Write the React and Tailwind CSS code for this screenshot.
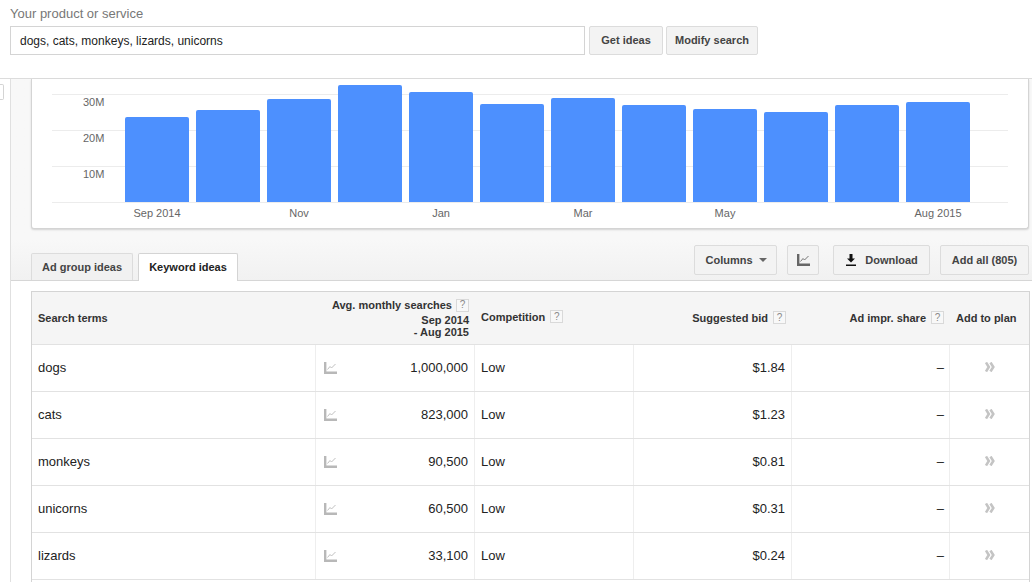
import React from 'react';

const bars = [
  { top: 117, label: 'Sep 2014' },
  { top: 110 },
  { top: 99, label: 'Nov' },
  { top: 85 },
  { top: 92, label: 'Jan' },
  { top: 104 },
  { top: 98, label: 'Mar' },
  { top: 105 },
  { top: 109, label: 'May' },
  { top: 112 },
  { top: 105 },
  { top: 102, label: 'Aug 2015' }
];

const rows = [
  { term: 'dogs', searches: '1,000,000', bid: '$1.84' },
  { term: 'cats', searches: '823,000', bid: '$1.23' },
  { term: 'monkeys', searches: '90,500', bid: '$0.81' },
  { term: 'unicorns', searches: '60,500', bid: '$0.31' },
  { term: 'lizards', searches: '33,100', bid: '$0.24' }
];

const cols = 'grid grid-cols-[283px_159px_159px_158px_158px_80px]';

function Help() {
  return (
    <span className="inline-flex w-[13px] h-[13px] items-center justify-center border border-[#d9d9d9] bg-[#f8f8f8] text-[10px] font-normal text-[#8a8a8a] leading-none align-middle">
      ?
    </span>
  );
}

function TrendIcon({ className }) {
  return (
    <svg viewBox="0 0 13 12" className={className} fill="none" stroke="currentColor">
      <path d="M1.200 0v10.800H13" strokeWidth="2.400" />
      <path d="M3.500 7.500 6 4.500l1.500 1.500L11.500 2" strokeWidth="0.9" />
    </svg>
  );
}

function GrayButton({ className = '', children }) {
  return (
    <button className={`flex items-center justify-center rounded-[2px] border border-[#dcdcdc] bg-[#f3f3f3] text-[11px] font-bold text-[#444] ${className}`}>
      {children}
    </button>
  );
}

export default function App() {
  return (
    <div className="w-[1032px] h-[582px] overflow-hidden bg-white font-['Liberation_Sans',Arial,sans-serif] text-[13px] text-[#222]">
      {/* Search bar */}
      <div className="h-[79px] border-b border-[#dcdcdc] pl-[10px] pt-[6px]">
        <div className="text-[13px] leading-[15px] text-[#777]">Your product or service</div>
        <div className="flex mt-[5px] h-[29px]">
          <div className="w-[575px] border border-[#d4d4d4] flex items-center pl-[9px] text-[12px]">
            dogs, cats, monkeys, lizards, unicorns
          </div>
          <GrayButton className="ml-[4px] w-[74px]">Get ideas</GrayButton>
          <GrayButton className="ml-[3px] w-[92px]">Modify search</GrayButton>
        </div>
      </div>

      <div className="flex">
        {/* Left rail */}
        <div className="w-[10px] shrink-0 pt-[5px]">
          <div className="w-[4px] h-[16px] border border-l-0 border-[#d4d4d4] rounded-r-[2px]"></div>
        </div>

        <div className="flex-1 min-w-0 border-l border-[#e0e0e0]">
          <div className="h-[202px] bg-gradient-to-b from-[#f8f8f8] from-80% to-[#f1f1f1] border-b border-[#d6d6d6] pl-[20px] pr-[3px] flex flex-col">
            {/* Chart panel */}
            <div className="h-[150px] bg-white border border-t-0 border-[#d4d4d4] rounded-b-[3px] shadow-[0_1px_2px_rgba(0,0,0,0.15)] shrink-0">
              <div className="relative h-[124px] ml-[20px] w-[956px] border-b border-[#ececec]">
                <div className="absolute left-0 right-0 top-[15px] border-t border-[#ececec]"></div>
                <div className="absolute left-0 right-0 top-[51px] border-t border-[#ececec]"></div>
                <div className="absolute left-0 right-0 top-[87px] border-t border-[#ececec]"></div>
                <div className="absolute left-[31px] top-[16px] text-[11px] leading-[14px] text-[#666]">30M</div>
                <div className="absolute left-[31px] top-[52px] text-[11px] leading-[14px] text-[#666]">20M</div>
                <div className="absolute left-[31px] top-[88px] text-[11px] leading-[14px] text-[#666]">10M</div>
                <div className="absolute left-[73px] top-0 bottom-0 flex items-end gap-[7px]">
                  {bars.map((b, i) => (
                    <div key={i} className="w-[64px] bg-[#4d90fe] rounded-t-[2px]" style={{ height: 202 - b.top }}></div>
                  ))}
                </div>
              </div>
              <div className="ml-[93px] flex gap-[7px] mt-[3px]">
                {bars.map((b, i) => (
                  <div key={i} className="w-[64px] text-center text-[11px] leading-[14px] text-[#666] whitespace-nowrap">
                    {b.label}
                  </div>
                ))}
              </div>
            </div>

            {/* Tabs and toolbar */}
            <div className="flex-1 flex items-end justify-between">
              <div className="flex items-end gap-[5px] -mb-px">
                <div className="w-[102px] h-[27px] mb-px flex items-center justify-center border border-b-0 border-[#dcdcdc] rounded-t-[2px] bg-[#f1f1f1] text-[11px] font-bold text-[#444]">
                  Ad group ideas
                </div>
                <div className="w-[100px] h-[28px] flex items-center justify-center border border-b-0 border-[#d4d4d4] rounded-t-[2px] bg-white text-[11px] font-bold text-[#222]">
                  Keyword ideas
                </div>
              </div>
              <div className="flex mb-[5px]">
                <GrayButton className="w-[83px] h-[30px] gap-[6px] pl-[1px]">
                  Columns
                  <span className="w-0 h-0 border-x-[4px] border-x-transparent border-t-[4px] border-t-[#666]"></span>
                </GrayButton>
                <GrayButton className="w-[32px] h-[30px] ml-[10px]">
                  <TrendIcon className="w-[13px] h-[12px] text-[#666]" />
                </GrayButton>
                <GrayButton className="w-[97px] h-[30px] ml-[14px] gap-[8px]">
                  <svg viewBox="0 0 12 12" className="w-[12px] h-[12px] text-[#111]" fill="currentColor">
                    <path d="M4.500 0h3v4.500H10L6 8.500 2 4.500h2.500zM1 10.500h10V12H1z" />
                  </svg>
                  Download
                </GrayButton>
                <GrayButton className="w-[89px] h-[30px] ml-[10px]">Add all (805)</GrayButton>
              </div>
            </div>
          </div>

          {/* Keyword table */}
          <div className="ml-[20px] mt-[10px] w-[999px] border-l border-t border-r border-[#d4d4d4]">
            <div className={`${cols} h-[52px] bg-[#f5f5f5] text-[11px] font-bold leading-[12px] text-[#333]`}>
              <div className="flex items-center pl-[6px]">Search terms</div>
              <div className="flex flex-col items-end justify-center pr-[5px] -ml-[60px]">
                <div className="flex items-center gap-[4px] mb-[2px] whitespace-nowrap">Avg. monthly searches <Help /></div>
                <div>Sep 2014</div>
                <div>- Aug 2015</div>
              </div>
              <div className="flex items-center gap-[5px] pl-[7px] pb-[3px]">Competition <Help /></div>
              <div className="flex items-center justify-end gap-[5px] pr-[5px] pb-[1px]">Suggested bid <Help /></div>
              <div className="flex items-center justify-end gap-[5px] pr-[5px] pb-[1px]">Ad impr. share <Help /></div>
              <div className="flex items-center pl-[7px]">Add to plan</div>
            </div>
            {rows.map((r) => (
              <div key={r.term} className={`${cols} h-[47px] border-t border-[#e2e2e2]`}>
                <div className="flex items-center pl-[6px]">{r.term}</div>
                <div className="flex items-center justify-between border-l border-[#eeeeee] pl-[8px] pr-[6px]">
                  <TrendIcon className="w-[13px] h-[12px] text-[#b8b8b8]" />
                  {r.searches}
                </div>
                <div className="flex items-center border-l border-[#eeeeee] pl-[6px]">Low</div>
                <div className="flex items-center justify-end border-l border-[#eeeeee] pr-[6px]">{r.bid}</div>
                <div className="flex items-center justify-end border-l border-[#eeeeee] pr-[5px]">–</div>
                <div className="flex items-center justify-center border-l border-[#eeeeee] pb-[2px]">
                  <svg viewBox="0 0 10 10" className="w-[10px] h-[10px] text-[#c4c4c4]" fill="none" stroke="currentColor" strokeWidth="2.600">
                    <path d="M1 .5 3.800 5 1 9.500M5.500 .5 8.300 5 5.500 9.500" />
                  </svg>
                </div>
              </div>
            ))}
            <div className={`${cols} h-[10px] border-t border-[#e2e2e2]`}></div>
          </div>
        </div>
      </div>
    </div>
  );
}
